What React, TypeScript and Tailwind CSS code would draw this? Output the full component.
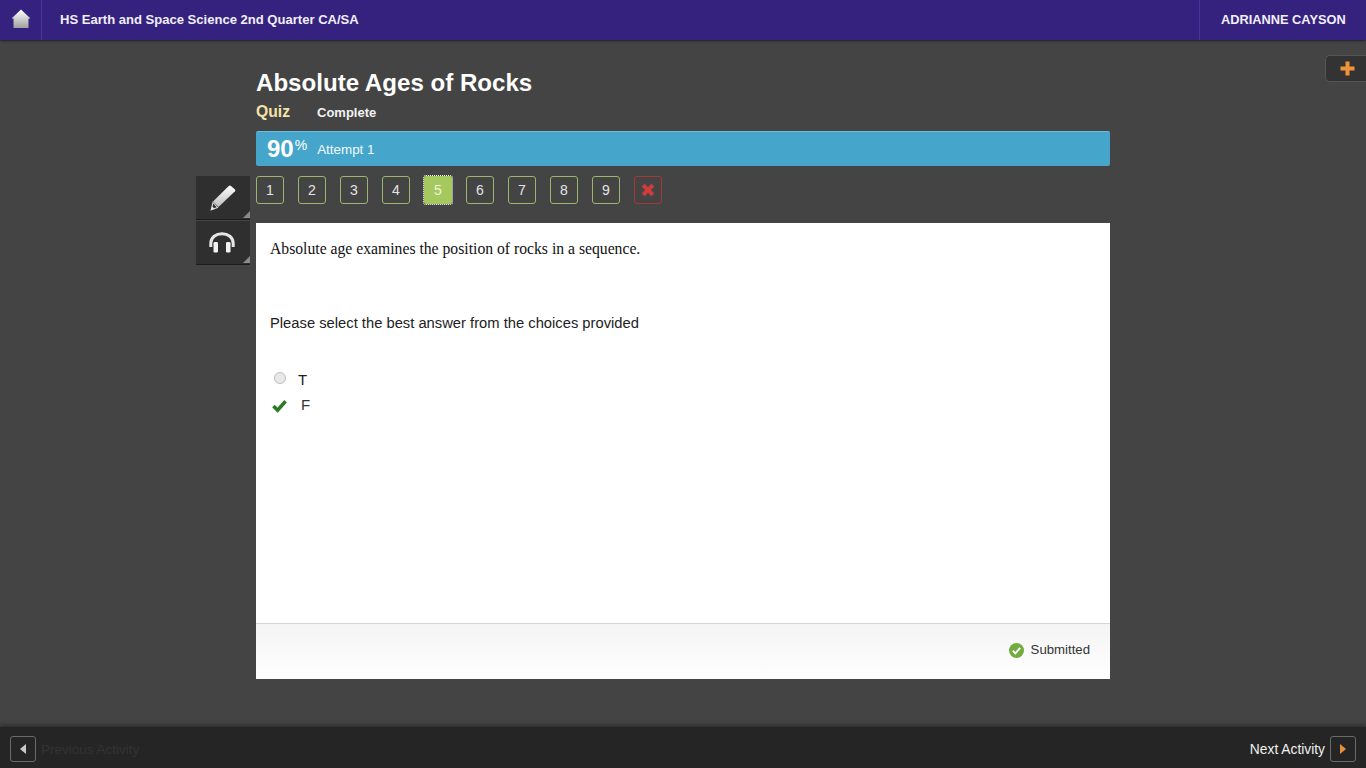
import React from 'react';

const numbers = [1, 2, 3, 4, 5, 6, 7, 8, 9];

const Corner = () => (
  <span className="absolute right-0 bottom-[1px] w-0 h-0 border-l-[7px] border-l-transparent border-b-[7px] border-b-[#8a8a8a]" />
);

const HomeIcon = () => (
  <svg width="20" height="20" viewBox="0 0 20 20">
    <defs>
      <linearGradient id="homeFill" x1="0" y1="0" x2="0" y2="1">
        <stop offset="0" stopColor="#ffffff" />
        <stop offset="1" stopColor="#a0a0a0" />
      </linearGradient>
    </defs>
    <path d="M10 0.5 L19.5 9.5 L17.5 9.5 L17.5 19 L2.5 19 L2.5 9.5 L0.5 9.5 Z" fill="url(#homeFill)" />
  </svg>
);

const PencilIcon = () => (
  <svg width="26" height="26" viewBox="0 0 26 26">
    <defs>
      <linearGradient id="pencilFill" x1="0" y1="0" x2="0" y2="1">
        <stop offset="0" stopColor="#ffffff" />
        <stop offset="1" stopColor="#bdbdbd" />
      </linearGradient>
    </defs>
    <path d="M19 0.8 Q20 0.2 21 1 L25 4.5 Q25.8 5.4 25 6.2 L8.5 22 L3 16.5 Z" fill="url(#pencilFill)" />
    <path d="M3 17.5 L7.5 22.5 L1.2 24.8 Z" fill="none" stroke="#d8d8d8" strokeWidth="1.1" />
    <path d="M1 25 L2.2 21.5 L4.6 23.8 Z" fill="#e8e8e8" />
  </svg>
);

const HeadphonesIcon = () => (
  <svg width="26" height="21" viewBox="0 0 26 21">
    <path d="M1.8 15 V11.5 C1.8 5 7 1.8 13 1.8 C19 1.8 24.2 5 24.2 11.5 V15" fill="none" stroke="#e6e6e6" strokeWidth="3" />
    <rect x="4.5" y="10" width="4.5" height="10.5" rx="1.2" fill="#f2f2f2" />
    <rect x="17" y="10" width="4.5" height="10.5" rx="1.2" fill="#f2f2f2" />
  </svg>
);

const CrossIcon = () => (
  <svg width="14" height="14" viewBox="0 0 14 14">
    <path d="M3.6 1 L7 4.4 L10.4 1 L13 3.6 L9.6 7 L13 10.4 L10.4 13 L7 9.6 L3.6 13 L1 10.4 L4.4 7 L1 3.6 Z" fill="#d13c3c" stroke="#d13c3c" strokeWidth="0.6" strokeLinejoin="round" />
  </svg>
);

const CheckIcon = ({ color, size, weight }: { color: string; size: number; weight: number }) => (
  <svg width={size} height={size} viewBox="0 0 16 16">
    <path d="M1.5 8.5 L6 13 L14.5 3.5" fill="none" stroke={color} strokeWidth={weight} />
  </svg>
);

export default function App() {
  return (
    <div className="relative h-screen flex flex-col bg-[#444444] overflow-hidden font-['Liberation_Sans',Arial,sans-serif]">
      {/* top bar */}
      <header className="h-10 shrink-0 flex items-center bg-[#35227f] shadow-[0_1px_2px_rgba(0,0,0,0.5)] text-[#f1eff8]">
        <a className="w-[42px] h-10 flex items-center justify-center border-r border-[#46349a] pb-[2px]">
          <HomeIcon />
        </a>
        <div className="flex-1 pl-[18px] text-[13.05px] font-bold">HS Earth and Space Science 2nd Quarter CA/SA</div>
        <div className="w-[167px] h-10 flex items-center border-l border-[#46349a] pl-[21px] text-[12.8px] font-bold">ADRIANNE CAYSON</div>
      </header>

      <main className="flex-1 min-h-0 pl-[196px] pt-[29px]">
        <div className="pl-[60px] w-[914px]">
          <h1 className="text-[24.1px] leading-7 font-bold text-white">Absolute Ages of Rocks</h1>
          <div className="flex items-center mt-[5px] h-[20px]">
            <span className="w-[61px] text-[15.7px] font-bold text-[#f5e2a8]">Quiz</span>
            <span className="text-[13px] font-bold text-[#f2f2f2] mt-[2px]">Complete</span>
          </div>
          <div className="mt-[9px] h-[35px] flex items-center rounded-[2px] bg-[#46a5cb] border-t border-[#6cbbdb] pl-[11px] text-white">
            <span className="text-[24px] leading-none font-bold">90</span>
            <span className="text-[14px] leading-none self-start mt-[6px] ml-[1px]">%</span>
            <span className="text-[13.4px] ml-[10px] mt-[2px] text-[#f2f9fc]">Attempt 1</span>
          </div>
        </div>

        <div className="flex mt-[10px]">
          <div className="w-[54px] mr-[6px] flex flex-col gap-[1px]">
            <button className="relative h-[44px] flex items-center justify-center bg-[#2f2f2f] border-b border-[#1c1c1c]">
              <PencilIcon />
              <Corner />
            </button>
            <button className="relative h-[44px] flex items-center justify-center pr-[2px] bg-[#2f2f2f] border-b border-[#1c1c1c]">
              <HeadphonesIcon />
              <Corner />
            </button>
          </div>

          <div className="w-[854px]">
            <div className="flex gap-[14px] h-[47px]">
              {numbers.map((n) =>
                n === 5 ? (
                  <div key={n} className="w-7 h-7 flex items-center justify-center bg-[#a5c95f] outline-1 outline-dotted outline-white text-[14px] text-[#eef5dc] rounded-[2px]">
                    {n}
                  </div>
                ) : (
                  <div key={n} className="w-7 h-7 flex items-center justify-center border border-[#9db56f] rounded-[3px] text-[14px] text-[#e4e4e4]">
                    {n}
                  </div>
                )
              )}
              <div className="w-7 h-7 flex items-center justify-center border border-[#a33a3a] rounded-[3px]">
                <CrossIcon />
              </div>
            </div>

            <section className="bg-white h-[456px] flex flex-col">
              <div className="flex-1 pl-[14px] pt-[17px] text-[#222222]">
                <p className="font-['Liberation_Serif',serif] text-[15.7px] leading-[18px] text-[#111111]">Absolute age examines the position of rocks in a sequence.</p>
                <p className="mt-[56px] text-[14.76px] leading-[18px]">Please select the best answer from the choices provided</p>
                <div className="mt-[38px] flex items-center h-[18px]">
                  <span className="ml-[4px] w-[12px] h-[12px] -mt-[3px] rounded-full bg-[#e8e8e8] border border-[#bdbdbd]" />
                  <span className="ml-[12px] text-[15px] mt-[2px]">T</span>
                </div>
                <div className="mt-[8px] flex items-center h-[18px]">
                  <span className="ml-[2px]">
                    <CheckIcon color="#2a7a22" size={15} weight={3.8} />
                  </span>
                  <span className="ml-[14px] text-[15px] mt-[1px] text-[#333333]">F</span>
                </div>
              </div>
              <div className="h-[56px] flex items-center justify-end pr-[20px] border-t border-[#d6d6d6] bg-gradient-to-b from-[#f4f4f4] to-white">
                <span className="w-[15px] h-[15px] rounded-full bg-[#72ab3f] flex items-center justify-center -mt-[3px]">
                  <CheckIcon color="#ffffff" size={9} weight={3.4} />
                </span>
                <span className="ml-[7px] text-[13.2px] text-[#333333] -mt-[3px]">Submitted</span>
              </div>
            </section>
          </div>
        </div>
      </main>

      {/* bottom bar */}
      <footer className="h-[41px] shrink-0 flex items-center justify-between bg-[#252525] shadow-[0_-2px_4px_rgba(0,0,0,0.35)] px-[10px] pt-[3px]">
        <div className="flex items-center">
          <span className="w-[26px] h-[26px] flex items-center justify-center border border-[#6a6a6a] rounded-[3px]">
            <span className="w-0 h-0 border-y-[5px] border-y-transparent border-r-[6px] border-r-[#c9c9c9]" />
          </span>
          <span className="ml-[5px] mt-[2px] text-[13.5px] text-[#333333]">Previous Activity</span>
        </div>
        <div className="flex items-center">
          <span className="mr-[5px] mt-[2px] text-[13.8px] text-[#f0f0f0]">Next Activity</span>
          <span className="w-[26px] h-[26px] flex items-center justify-center border border-[#6a6a6a] rounded-[3px]">
            <span className="w-0 h-0 border-y-[5px] border-y-transparent border-l-[6px] border-l-[#e58f3a]" />
          </span>
        </div>
      </footer>

      {/* expand tab */}
      <button className="absolute right-0 top-[55px] w-[41px] h-[27px] flex items-center justify-center pl-[2px] bg-[#333333] border border-[#555555] border-r-0 rounded-l-[5px]">
        <svg width="15" height="15" viewBox="0 0 15 15">
          <path d="M5.5 0.5 H9.5 V5.5 H14.5 V9.5 H9.5 V14.5 H5.5 V9.5 H0.5 V5.5 H5.5 Z" fill="#f0943a" />
        </svg>
      </button>
    </div>
  );
}
